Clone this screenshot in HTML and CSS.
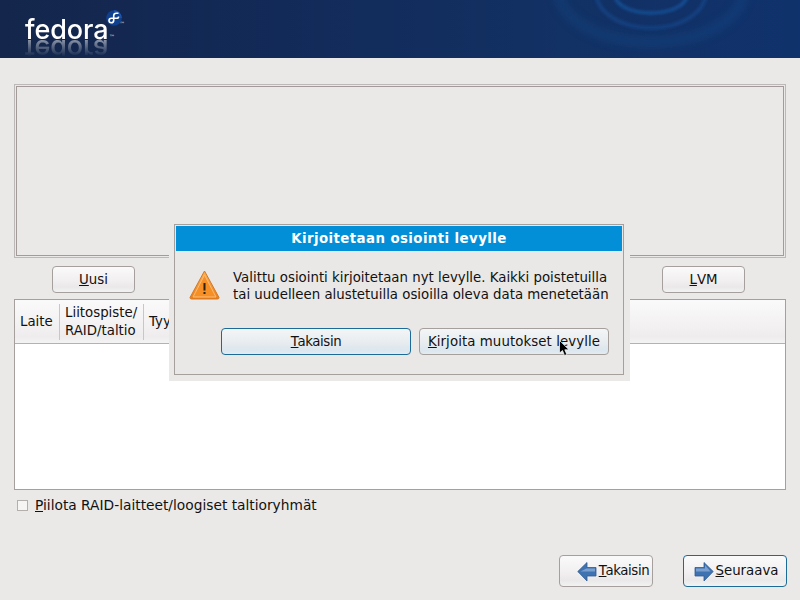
FILE: index.html
```html
<!DOCTYPE html>
<html lang="fi">
<head>
<meta charset="utf-8">
<title>Fedora</title>
<link rel="stylesheet" href="styles.css">
</head>
<body>
<div class="screen">
  <header class="banner">
    <svg class="ripples" width="800" height="58" viewBox="0 0 800 58" aria-hidden="true">
      <defs>
        <linearGradient id="bg" x1="0" x2="1" y1="0" y2="0">
          <stop offset="0" stop-color="#14264b"/>
          <stop offset="0.35" stop-color="#122a58"/>
          <stop offset="0.7" stop-color="#123164"/>
          <stop offset="1" stop-color="#10326c"/>
        </linearGradient>
        <filter id="soft"><feGaussianBlur stdDeviation="1.8"/></filter>
        <filter id="softer"><feGaussianBlur stdDeviation="4"/></filter>
      </defs>
      <rect width="800" height="58" fill="url(#bg)"/>
      <g fill="none">
        <ellipse cx="651" cy="-8" rx="92" ry="50" stroke="#144683" stroke-width="9" opacity=".5" filter="url(#softer)"/>
        <ellipse cx="651" cy="-8" rx="55" ry="36" stroke="#174f97" stroke-width="3.5" opacity=".55" filter="url(#soft)"/>
        <ellipse cx="651" cy="-5" rx="36" ry="18" stroke="#195aa6" stroke-width="3" opacity=".8" filter="url(#soft)"/>
      </g>
    </svg>
    <div class="logo">
      <span class="wordmark">fedora</span>
      <span class="tm">™</span>
      <span class="tm tm-bubble">™</span>
      <svg class="bubble" width="16" height="16" viewBox="0 0 16 16" aria-hidden="true">
        <circle cx="8" cy="8" r="7.8" fill="#0f3f8f"/>
        <path d="M8 1A7 7 0 0 1 15 8" fill="none" stroke="#1f56ae" stroke-width="1.6"/>
        <path d="M12.5 3.2H10.2Q7.7 3.2 7.7 5.8V10.2Q7.7 12.8 5.2 12.8 3 12.8 3 10.6 3 8.2 5.4 8.2H10.8Q12.6 8.2 12.6 6.4" fill="none" stroke="#fff" stroke-width="1.6"/>
      </svg>
    </div>
  </header>

  <main class="content">
    <div class="canvas"></div>
    <div class="actions">
      <button class="btn action"><u>U</u>usi</button>
      <button class="btn action"><u>L</u>VM</button>
    </div>
    <div class="table">
      <div class="thead">
        <div class="th laite">Laite</div>
        <div class="th mount">Liitospiste/<br>RAID/taltio</div>
        <div class="th type">Tyyppi</div>
      </div>
    </div>
    <label class="check"><span class="box"></span><span><u>P</u>iilota RAID-laitteet/loogiset taltioryhmät</span></label>
  </main>

  <footer class="nav">
    <button class="btn navbtn back">
      <svg width="20" height="21" viewBox="0 0 20 21" aria-hidden="true"><path d="M.8 10.5 10 1.5V6.5H19V15H10V20Z" fill="#3f72b0" stroke="#2d5a94" stroke-width=".8"/><path d="M9.5 7.5H18V10.5H3.5Z" fill="#7ba0cf"/></svg>
      <span class="snug"><u class="kern">T</u>akaisin</span>
    </button>
    <button class="btn navbtn focus">
      <svg width="20" height="21" viewBox="0 0 20 21" aria-hidden="true"><path d="M19.2 10.5 10 1.5V6.5H1V15H10V20Z" fill="#3f72b0" stroke="#2d5a94" stroke-width=".8"/><path d="M2 7.5H11V4L16.5 10.5H2Z" fill="#7ba0cf"/></svg>
      <span><u>S</u>euraava</span>
    </button>
  </footer>

  <div class="halo">
    <section class="dialog">
      <h1 class="title">Kirjoitetaan osiointi levylle</h1>
      <div class="message">
        <svg width="31" height="30" viewBox="0 0 31 30" aria-hidden="true">
          <defs><linearGradient id="warn" x1="0" x2="0" y1="0" y2="1"><stop offset="0" stop-color="#fbb054"/><stop offset="1" stop-color="#f07c14"/></linearGradient></defs>
          <path d="M15.5 1 30 27.5Q30 29 28.5 29H2.5Q1 29 1 27.5Z" fill="url(#warn)" stroke="#cf7a2a" stroke-linejoin="round"/>
          <path d="M15.5 5 27 27H4Z" fill="#f58f26" stroke="#fbbd78"/>
          <rect x="14.5" y="13" width="2" height="7.5" fill="#2e2310"/>
          <rect x="14.5" y="22" width="2" height="2" fill="#2e2310"/>
        </svg>
        <p>Valittu osiointi kirjoitetaan nyt levylle. Kaikki poistetuilla<br>tai uudelleen alustetuilla osioilla oleva data menetetään</p>
      </div>
      <div class="choices">
        <button class="btn tint focus wide"><span class="snug"><u class="kern">T</u>akaisin</span></button>
        <button class="btn tint write"><u>K</u>irjoita muutokset levylle</button>
      </div>
    </section>
  </div>

  <svg class="cursor" width="12" height="17" viewBox="0 0 12 17" aria-hidden="true"><path d="M.5.5V13L3.5 10.5 5.5 15.5 7.8 14.5 5.8 9.8H10Z" fill="#000" stroke="#fff" stroke-width=".7"/></svg>
</div>
</body>
</html>
```
FILE: styles.css
```css
* { box-sizing: border-box; }
html, body { margin: 0; padding: 0; }
body {
  width: 800px;
  height: 600px;
  overflow: hidden;
  background: #eae9e7;
  color: #111;
  font: 13.33px/16px "DejaVu Sans", sans-serif;
}
.screen {
  position: relative;
  width: 800px;
  height: 600px;
  display: flex;
  flex-direction: column;
}
.banner {
  position: relative;
  height: 58px;
  flex: none;
  overflow: hidden;
  background: #122a58;
}
.ripples { position: absolute; left: 0; top: 0; }
.logo { position: absolute; left: 25px; top: 0; width: 110px; height: 58px; }
.wordmark {
  position: absolute;
  left: 0;
  top: 15px;
  color: #fff;
  font: 500 27px/30px "Inter", sans-serif;
  letter-spacing: -.1px;
  -webkit-box-reflect: below -11px linear-gradient(transparent 25%, rgba(255, 255, 255, .5) 80%);
}
.tm { position: absolute; left: 84px; top: 33px; color: #dfe6f0; font-size: 6px; line-height: 8px; }
.tm-bubble { left: 94px; top: 20px; }
.bubble { position: absolute; left: 81px; top: 10px; }

.content {
  flex: 1;
  display: flex;
  flex-direction: column;
  padding: 26px 14px 0;
}
.canvas {
  height: 174px;
  border: 1px solid #bdb8b8;
  box-shadow: inset 0 0 0 1px #eae9e7, inset 0 0 0 2px #a39a9a;
}
.actions {
  display: flex;
  justify-content: space-between;
  padding: 8px 41px 6px 38px;
}
.btn {
  display: inline-flex;
  align-items: center;
  justify-content: center;
  padding: 0;
  font: inherit;
  color: inherit;
  border: 1px solid #a5a09e;
  border-radius: 4px;
  background: linear-gradient(#fbfafa, #f1efef 55%, #eae8e8 80%, #f3f2f2);
}
.action { width: 83px; height: 27px; }
.table {
  height: 191px;
  border: 1px solid #a5a09e;
  background: #fff;
}
.thead {
  height: 44px;
  display: flex;
  align-items: center;
  border-bottom: 1px solid #b5b1b0;
  background: linear-gradient(#fbfafa, #f1efef 70%, #eeecec 85%, #f4f3f3);
}
.th { padding: 0 5px; }
.th + .th { border-left: 1px solid #c9c6c5; height: 36px; display: flex; align-items: center; }
.laite { width: 44px; padding-left: 5px; }
.mount { width: 84px; display: block; line-height: 18px; }
.check {
  display: flex;
  align-items: center;
  gap: 7px;
  margin-top: 6px;
  padding-left: 3px;
  height: 18px;
  font-size: 13.77px;
}
.box {
  width: 11px;
  height: 11px;
  border: 1px solid #b3afad;
  background: #f6f5f4;
  flex: none;
}
.nav {
  position: absolute;
  right: 13px;
  top: 555px;
  display: flex;
  gap: 30px;
}
.navbtn { width: 94px; height: 32px; gap: 2px; padding-left: 2px; }
.navbtn.back { padding-left: 14px; }
.navbtn.focus { width: 104px; }
.focus { border-color: #1c6a97; }
.kern { margin-right: -1px; }
.snug { letter-spacing: -.4px; }

.halo {
  position: absolute;
  left: 169px;
  top: 219px;
  width: 461px;
  height: 162px;
  padding: 5px 6px 6px 5px;
  background: #eae9e7;
}
.dialog {
  height: 151px;
  border: 1px solid #a5a09e;
  padding: 1px;
  background: #e9e8e6;
}
.title {
  margin: 0;
  height: 25px;
  background: #028fd8;
  color: #fff;
  font: 700 13.33px/25px "DejaVu Sans", sans-serif;
  letter-spacing: .42px;
  text-align: center;
}
.message {
  display: flex;
  align-items: flex-start;
  gap: 13px;
  padding: 18px 0 0 13px;
}
.message svg { flex: none; margin-top: 1px; }
.message p { margin: 0; line-height: 17px; }
.choices {
  display: flex;
  justify-content: flex-end;
  gap: 8px;
  padding: 25px 13px 0 0;
}
.tint {
  width: 190px;
  height: 27px;
  background: linear-gradient(#f3f5f6, #e9edf0 50%, #dbe6ee 85%, #e4ebf0);
}
.focus.tint { border-width: 1.5px; }
.write { letter-spacing: .08px; }
.cursor { position: absolute; left: 559px; top: 340px; }
```
